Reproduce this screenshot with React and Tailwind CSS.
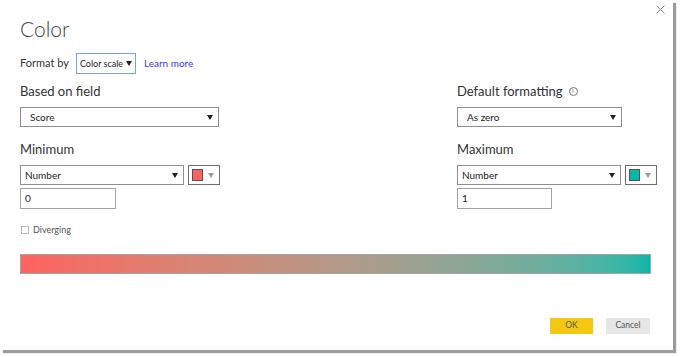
import React from 'react';

const FONT = { fontFamily: 'Lato, "Noto Sans", sans-serif' };

function Caret({ className = 'fill-[#222]' }) {
  return (
    <svg width="6" height="5" viewBox="0 0 6 5" className={`shrink-0 ${className}`}>
      <path d="M0 0h6L3 5z" />
    </svg>
  );
}

function Select({ value, width, pad = 'pl-[9px]' }) {
  return (
    <div className={`flex h-[20px] shrink-0 items-center justify-between border border-[#8f8f8f] bg-white pr-[5px] ${pad} ${width}`}>
      <span className="whitespace-nowrap text-[10px] text-[#252423]">{value}</span>
      <Caret />
    </div>
  );
}

function Swatch({ color }) {
  return (
    <div className="flex h-[20px] w-[32px] shrink-0 items-center gap-[5px] border border-[#6f6f6f] bg-white pl-[3px]">
      <div className={`h-[12px] w-[11px] border border-[#555] ${color}`} />
      <Caret className="fill-[#9a9a9a]" />
    </div>
  );
}

function NumberInput({ value, width }) {
  return (
    <div className={`mt-[3px] flex h-[21px] items-center border border-[#a3a3a3] pl-[4px] text-[10px] text-[#252423] ${width}`}>
      {value}
    </div>
  );
}

function Column({ children, className = '' }) {
  return <div className={`flex shrink-0 flex-col ${className}`}>{children}</div>;
}

export default function App() {
  return (
    <div className="h-[357px] w-[680px] bg-white" style={FONT}>
      <div className="relative h-[350px] w-[673px] bg-white shadow-[3px_3px_1px_#9c9c9c]">
        {/* close */}
        <svg width="9" height="9" viewBox="0 0 9 9" className="absolute right-[8px] top-[5px] stroke-[#8a8a8a]">
          <path d="M0.5 0.5l8 8M8.5 0.5l-8 8" strokeWidth="1" />
        </svg>

        <div className="px-[20px] pt-[15px]">
          <h1 className="text-[21px] font-light leading-[28px] text-[#444]">Color</h1>

          <div className="mt-[10px] flex items-center">
            <span className="whitespace-nowrap text-[11px] text-[#333]">Format by</span>
            <div className="ml-[7px] flex h-[21px] w-[60px] items-center justify-between border border-[#7aa0e0] pl-[3px] pr-[3px]">
              <span className="whitespace-nowrap text-[9px] text-[#252423]">Color scale</span>
              <Caret />
            </div>
            <span className="ml-[8px] whitespace-nowrap text-[10px] text-[#3a3af0]">Learn more</span>
          </div>

          <div className="mt-[6px] flex">
            <Column className="w-[437px]">
              <span className="text-[13px] leading-[22px] text-[#333]">Based on field</span>
              <div className="mt-[5px]">
                <Select value="Score" width="w-[199px]" />
              </div>
              <span className="mt-[11px] text-[13px] leading-[22px] text-[#333]">Minimum</span>
              <div className="mt-[5px] flex gap-[4px]">
                <Select value="Number" width="w-[164px]" pad="pl-[4px]" />
                <Swatch color="bg-[#fd625e]" />
              </div>
              <NumberInput value="0" width="w-[96px]" />
              <div className="mt-[14px] flex items-center gap-[4px] pl-[1px]">
                <div className="h-[8px] w-[8px] border border-[#bdbdbd]" />
                <span className="text-[9px] text-[#555]">Diverging</span>
              </div>
            </Column>
            <Column>
              <div className="flex items-center gap-[6px]">
                <span className="text-[13px] leading-[22px] text-[#333]">Default formatting</span>
                <div className="flex h-[9px] w-[9px] items-center justify-center rounded-full border border-[#777] text-[6px] leading-none text-[#555]">i</div>
              </div>
              <div className="mt-[5px]">
                <Select value="As zero" width="w-[165px]" />
              </div>
              <span className="mt-[11px] text-[13px] leading-[22px] text-[#333]">Maximum</span>
              <div className="mt-[5px] flex gap-[4px]">
                <Select value="Number" width="w-[164px]" pad="pl-[4px]" />
                <Swatch color="bg-[#01b8aa]" />
              </div>
              <NumberInput value="1" width="w-[95px]" />
            </Column>
          </div>

          <div className="mt-[17px] h-[20px] w-[631px] border border-[#a5a5a5] bg-gradient-to-r from-[#fd625e] to-[#01b8aa]" />

          <div className="mt-[44px] flex justify-end gap-[13px] pr-[3px]">
            <button className="h-[16px] w-[43px] bg-[#f2c811] text-[8.5px] text-[#555]">OK</button>
            <button className="h-[16px] w-[44px] bg-[#e6e6e6] text-[8.5px] text-[#555]">Cancel</button>
          </div>
        </div>
      </div>
    </div>
  );
}
